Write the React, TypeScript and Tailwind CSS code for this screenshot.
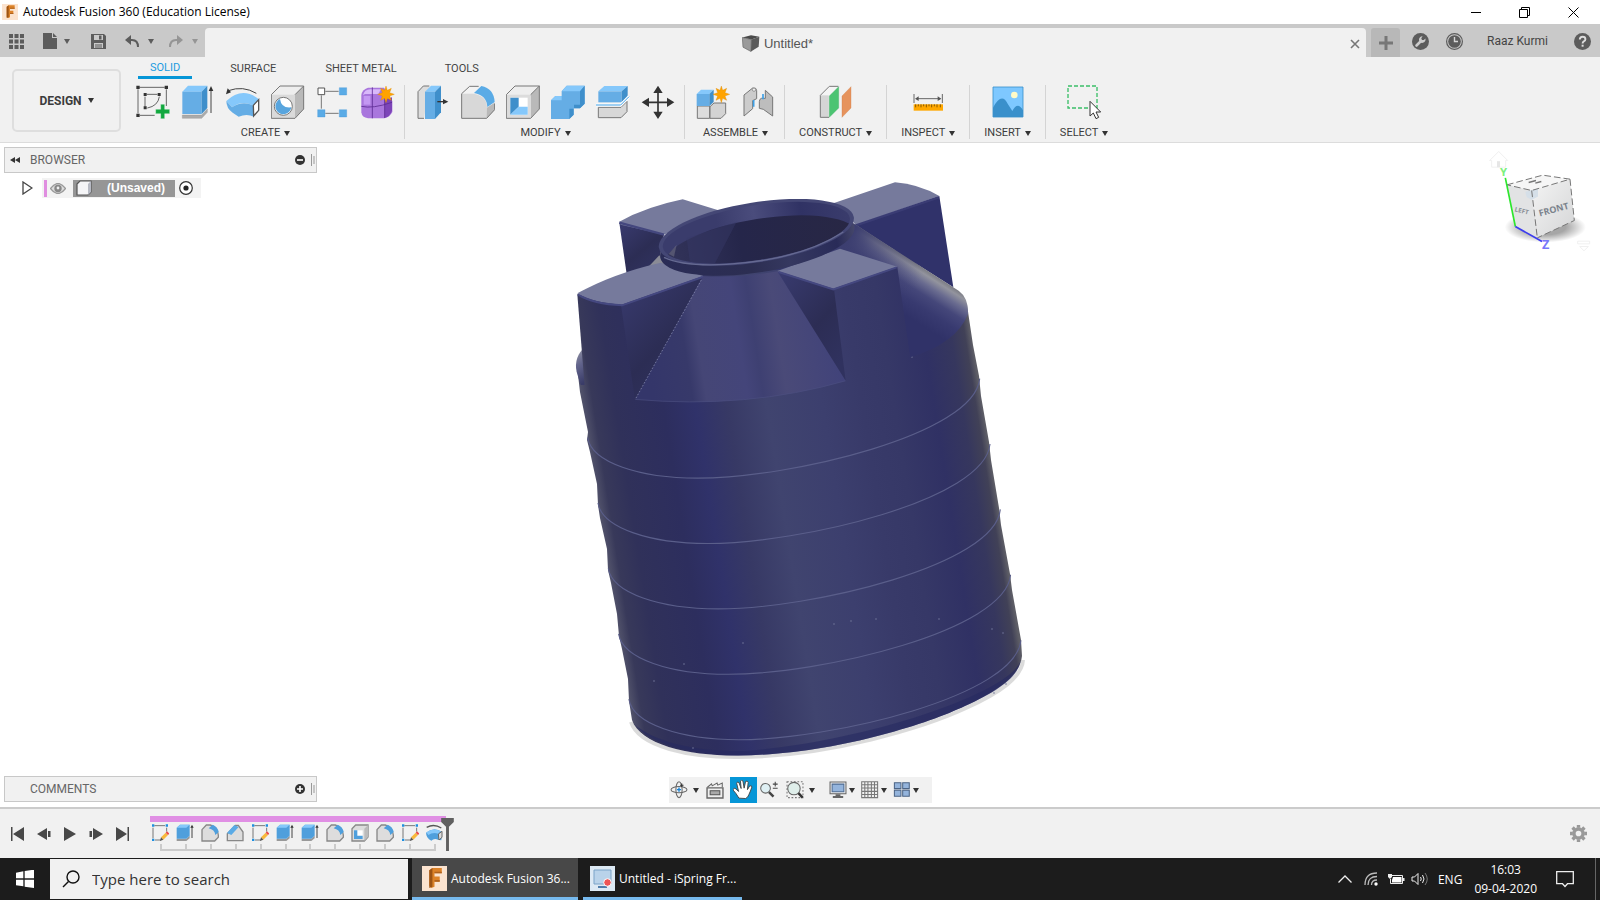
import type { ReactNode } from "react";

const UI = "font-[Roboto,'Liberation_Sans',sans-serif]";
const WIN = "font-['Open_Sans','Noto_Sans',sans-serif]";

function Svg({ box, className, children }: { box: string; className: string; children: ReactNode }) {
  return (
    <svg viewBox={box} className={"shrink-0 " + className} fill="none" aria-hidden="true">
      {children}
    </svg>
  );
}

function Caret({ className = "text-[#333]" }: { className?: string }) {
  return (
    <svg viewBox="0 0 6 5" className={"h-[5px] w-[6px] shrink-0 " + className} aria-hidden="true">
      <path d="M0 0h6L3 5z" fill="currentColor" />
    </svg>
  );
}

/* ---------- ribbon icons: 102 units = 34px ---------- */
function Big({ box, children }: { box: string; children: ReactNode }) {
  return <Svg box={box} className="h-[34px] w-[34px]">{children}</Svg>;
}

function Star({ x, y, s = 1 }: { x: number; y: number; s?: number }) {
  return (
    <path
      transform={`translate(${x} ${y}) scale(${s})`}
      d="M0-25L4-12 16-18 11-5 25 0 11 5 16 18 4 12 0 25-4 12-16 18-11 5-25 0-11-5-16-18-4-12z"
      fill="#ffa300"
      stroke="#d98600"
      strokeWidth="1"
    />
  );
}

const create: [string, ReactNode][] = [
  ["Create Sketch", (
    <Big box="408 255 102 102">
      <path d="M418 262h76M414 268v72M499 268v50M420 346h44M440 283h32M435 290v30M478 290q-4 28-36 34" stroke="#666" strokeWidth="3" />
      <path d="M409 257h10v10h-10zM494 257h10v10h-10zM409 341h10v10h-10zM431 279h9v9h-9zM473 279h9v9h-9zM431 319h9v9h-9z" fill="#333" />
      <path d="M482 313h12v15h15v13h-15v15h-12v-15h-15v-13h15z" fill="#12a83f" stroke="#fff" strokeWidth="1" />
    </Big>
  )],
  ["Extrude", (
    <Big box="543 255 102 102">
      <path d="M547 345h58l17-18v10l-17 18h-58z" fill="#ababab" stroke="#888" />
      <path d="M547 275l17-18h58l-17 18z" fill="#85c8fb" />
      <path d="M547 275h58v67h-58z" fill="#65ade5" />
      <path d="M605 275l17-18v67l-17 18z" fill="#3f8fcb" />
      <path d="M633 339v-70" stroke="#444" strokeWidth="3" />
      <path d="M626 273l7-15 7 15z" fill="#333" />
    </Big>
  )],
  ["Revolve", (
    <Big box="678 255 102 102">
      <path d="M685 272q44-16 84 8" stroke="#444" strokeWidth="3" />
      <path d="M678 283l5-18 10 12z" fill="#333" />
      <path d="M679 303q48-45 98-5l-17 19q-32-18-64 5z" fill="#85c8fb" />
      <path d="M679 303l17 19q32-22 64-5l2 33q-22-10-46 0l-18-12q-19-13-19-35z" fill="#65ade5" />
      <path d="M760 316l16-17v32l-15 17z" fill="#fff" stroke="#555" strokeWidth="4" />
    </Big>
  )],
  ["Hole", (
    <Big box="813 255 102 102">
      <path d="M814 284l26-26h71l-26 26z" fill="#eee" />
      <path d="M885 284l26-26v69l-26 28z" fill="#b9b9b9" />
      <path d="M814 284h71v71h-71z" fill="#dadada" />
      <path d="M814 284l26-26h71v69l-26 28h-71zM911 258l-26 26" stroke="#777" strokeWidth="3" />
      <circle cx="850" cy="319" r="27" fill="#fff" stroke="#777" strokeWidth="3" />
      <path d="M840 297a24 24 0 1 0 34 25q-30 4-34-25z" fill="#58a5de" />
    </Big>
  )],
  ["Pattern", (
    <Big box="942 255 102 102">
      <path d="M970 274h40M958 286v40M970 340h40" stroke="#777" strokeWidth="3" />
      <path d="M948 264h20v20h-20z" fill="#fff" stroke="#555" strokeWidth="3" />
      <path d="M1012 263h22v22h-22zM947 329h22v22h-22zM1012 329h22v22h-22z" fill="#5aabe6" stroke="#3d93d3" />
    </Big>
  )],
  ["Create Form", (
    <Big box="1080 255 102 102">
      <path d="M1081 285q2-16 20-22h48l25 40v33q-8 16-24 19h-49q-18-2-20-18z" fill="#a976dd" />
      <path d="M1086 286q4-18 22-18h32l-8 14h-40z" fill="#d9b9fa" />
      <path d="M1151 300l22-8v40q-6 18-22 21z" fill="#7d45b8" />
      <path d="M1081 319q34 8 92-12M1114 262v93M1151 280v74" stroke="#5e2d94" strokeWidth="2.500" />
      <path d="M1088 288h20v26h-20z" fill="#c498f2" />
      <Star x={1155} y={283} />
    </Big>
  )],
];

const modify: [string, ReactNode][] = [
  ["Press Pull", (
    <Big box="48 255 102 102">
      <path d="M72 355H54v-80l16-17h18" fill="#ddd" stroke="#777" strokeWidth="3" />
      <path d="M75 275l18-18h30l-18 18z" fill="#85c8fb" />
      <path d="M75 275h30v82H75z" fill="#65ade5" />
      <path d="M105 275l18-18v80l-18 20z" fill="#3f8fcb" />
      <path d="M112 305h20" stroke="#333" strokeWidth="4" />
      <path d="M129 297l16 8-16 8z" fill="#333" />
    </Big>
  )],
  ["Fillet", (
    <Big box="183 255 102 102">
      <path d="M185 281l24-22h27l-14 20z" fill="#f3f3f3" />
      <path d="M185 281h36q40 6 40 42l23-15v21l-24 26h-75z" fill="#d8d8d8" />
      <path d="M261 323l23-15v21l-24 26z" fill="#b9b9b9" />
      <path d="M236 259l-27 0-24 22v74h75l24-26v-18" stroke="#777" strokeWidth="3" />
      <path d="M222 279l22-21q38 8 40 48l-22 15q-2-36-40-42z" fill="#5aabe6" />
    </Big>
  )],
  ["Shell", (
    <Big box="318 255 102 102">
      <path d="M319 284l26-26h73l-26 26z" fill="#eee" />
      <path d="M392 284l26-26v69l-26 28z" fill="#b9b9b9" />
      <path d="M319 284h73v71h-73z" fill="#dcdcdc" />
      <path d="M319 284l26-26h73v69l-26 28h-73zM418 258l-26 26" stroke="#777" strokeWidth="3" />
      <path d="M331 293h52v51h-52z" fill="#fff" />
      <path d="M331 293l25 0v27l-25 24z" fill="#3f8fcb" />
      <path d="M331 344l25-24h27v24z" fill="#85c8fb" />
    </Big>
  )],
  ["Combine", (
    <Big box="453 255 102 102">
      <path d="M453 301l13-13h19v-14l15-17h54v54l-14 14h-19v19l-13 13h-55z" fill="#65ade5" />
      <path d="M485 274l15-17h54l-14 17zM453 301l13-13h19v13z" fill="#85c8fb" />
      <path d="M540 274l14-17v54l-14 14h-19v19l-13 13v-31h14v-12h18z" fill="#3f8fcb" />
    </Big>
  )],
  ["Split Body", (
    <Big box="588 255 102 102">
      <path d="M595 274l18-16h70l-18 16z" fill="#85c8fb" />
      <path d="M595 274h70v33h-70z" fill="#65ade5" />
      <path d="M665 274l18-16v32l-18 17z" fill="#3f8fcb" />
      <path d="M595 322h68l18-18v31l-18 18h-68z" fill="#d8d8d8" stroke="#777" strokeWidth="3" />
      <path d="M588 315h74l25-25" stroke="#fff" strokeWidth="9" />
      <path d="M588 315h74l25-25" stroke="#3ea0e6" strokeWidth="3" />
    </Big>
  )],
  ["Move", (
    <Big box="721 255 102 102">
      <path d="M772 272v70M738 307h70" stroke="#333" strokeWidth="5" />
      <path d="M772 257l14 22h-28zM772 357l14-22h-28zM723 307l22-14v28zM821 307l-22-14v28z" fill="#333" />
    </Big>
  )],
];

const assemble: [string, ReactNode][] = [
  ["New Component", (
    <Big box="888 255 102 102">
      <path d="M892 318h37v37h-37z" fill="#ddd" stroke="#777" strokeWidth="3" />
      <path d="M930 320l12-11h35v32l-14 14h-33z" fill="#d3d3d3" stroke="#777" strokeWidth="3" />
      <path d="M890 282l13-13h38l-13 13z" fill="#85c8fb" />
      <path d="M890 282h38v36h-38z" fill="#65ade5" />
      <path d="M928 282l13-13v37l-13 12z" fill="#3f8fcb" />
      <Star x={964} y={283} />
    </Big>
  )],
  ["Joint", (
    <Big box="1023 255 102 102">
      <path d="M1032 285l26-21q12-2 12 8v24l-12 6v24l-26 22z" fill="#ccc" stroke="#777" strokeWidth="3" />
      <path d="M1118 291l-22-20v24h-12q-6 2-6 10v20l12 3 28 20z" fill="#bdbdbd" stroke="#777" strokeWidth="3" />
      <path d="M1061 300v20M1089 282v16" stroke="#3ea0e6" strokeWidth="5" />
      <circle cx="1062" cy="269" r="5" fill="#eee" stroke="#777" strokeWidth="2" />
    </Big>
  )],
];

const construct: [string, ReactNode][] = [
  ["Offset Plane", (
    <Big box="123 255 102 102">
      <path d="M127 286l27-27h27v13l-28 28v52h-26z" fill="#f4f4f4" />
      <path d="M128 286h24v65h-24z" fill="#d5d5d5" />
      <path d="M153 352h-26v-66l27-27h27" stroke="#777" strokeWidth="3" />
      <path d="M154 288l28-28v64l-28 28z" fill="#4cc472" stroke="#38a65c" />
      <path d="M192 288l27-28v64l-27 28z" fill="#e6935d" stroke="#cf7c45" />
    </Big>
  )],
];

const inspect: [string, ReactNode][] = [
  ["Measure", (
    <Big box="399 255 102 102">
      <path d="M408 282v27M493 282v27M415 296h72" stroke="#666" strokeWidth="3" />
      <path d="M411 296l11-7v14zM490 296l-11-7v14z" fill="#555" />
      <path d="M407 313h88v19h-88z" fill="#ffa800" />
      <path d="M413 313v9M421 313v6M429 313v9M437 313v6M445 313v9M453 313v6M461 313v9M469 313v6M477 313v9M487 313v9" stroke="#8a5a00" strokeWidth="3" />
    </Big>
  )],
];

const insert: [string, ReactNode][] = [
  ["Insert Image", (
    <Big box="630 255 102 102">
      <path d="M636 261h90v90h-90z" fill="#7ec8ff" />
      <circle cx="700" cy="285" r="10" fill="#fffbc8" />
      <path d="M636 323q26-48 44-12l14 22q16-30 32-2v20h-90z" fill="#3a90cb" />
      <path d="M636 261h90v90h-90z" stroke="#3a90cb" strokeWidth="2.500" />
    </Big>
  )],
];

const select: [string, ReactNode][] = [
  ["Select", (
    <Big box="854 255 102 102">
      <path d="M857 258h87v66h-87z" stroke="#3bbf68" strokeWidth="4" strokeDasharray="12 6" />
      <path d="M923 304v44l10-9 8 17 8-4-8-16h14z" fill="#fff" stroke="#333" strokeWidth="3" />
    </Big>
  )],
];

function Group({ label, tools, last, wide }: { label: string; tools: [string, ReactNode][]; last?: boolean; wide?: boolean }) {
  return (
    <section
      aria-label={label}
      className={"flex h-[54px] flex-col items-center justify-between " + (wide ? "pl-[11px] pr-[9px] " : "px-[14px] ") + (last ? "" : "border-r border-[#d4d4d4]")}
    >
      <div className="flex gap-[11px]">
        {tools.map(([name, icon]) => (
          <button key={name} type="button" aria-label={name} className="block">{icon}</button>
        ))}
      </div>
      <button type="button" className="flex items-center gap-1 text-[11px] leading-[12px] text-[#3c3c3c]">
        {label}
        <Caret />
      </button>
    </section>
  );
}

function FusionLogo({ className }: { className: string }) {
  return (
    <Svg box="0 0 24 24" className={className}>
      <path d="M0 0h24v24H0z" fill="#fbe3cf" />
      <path d="M7 4l3-2h9v5h-7v3h5v5h-5v5l-3 1-2-2z" fill="#dc8228" />
      <path d="M7 4l3-2v18l-3 1z" fill="#9c5314" />
      <path d="M12 7h7V5.500h-7zM12 15h5v-1.500h-5z" fill="#b0621d" />
    </Svg>
  );
}

/* ---------- timeline icons: 54 units = 18px ---------- */
function SketchMini() {
  return (
    <Svg box="454 192 54 54" className="h-[18px] w-[18px]">
      <path d="M464 197h32M460 203v32M501 203v12M466 240h18" stroke="#777" strokeWidth="3" />
      <path d="M457 193h7v7h-7zM498 193h7v7h-7zM457 236h7v7h-7z" fill="#1f8fe0" />
      <path d="M484 232l14-14 7 7-14 14z" fill="#f8b93c" />
      <path d="M498 218l4-4 7 7-4 4z" fill="#ea4b4b" />
      <path d="M484 232l7 7-10 4z" fill="#555" />
    </Svg>
  );
}
function ExtrudeMini() {
  return (
    <Svg box="529 192 54 54" className="h-[18px] w-[18px]">
      <path d="M531 236h29l10-9v8l-10 8h-29z" fill="#999" />
      <path d="M531 203l10-9h29v33l-10 9h-29z" fill="#4f9fdc" />
      <path d="M531 203l10-9h29l-10 9z" fill="#85c8fb" />
      <path d="M577 234v-33" stroke="#444" strokeWidth="3" />
      <path d="M572 203l5-9 5 9z" fill="#333" />
    </Svg>
  );
}
function FilletMini() {
  return (
    <Svg box="604 192 54 54" className="h-[18px] w-[18px]">
      <path d="M607 209l13-14h12q22 8 24 30v7l-11 11h-38z" fill="#ddd" stroke="#888" strokeWidth="4" />
      <path d="M627 205l12-11q15 6 18 22l-10 9q-2-16-20-20z" fill="#4f9fdc" />
    </Svg>
  );
}
function ChamferMini() {
  return (
    <Svg box="679 192 54 54" className="h-[18px] w-[18px]">
      <path d="M683 221l24-25h9l14 20v26h-47z" fill="#ddd" stroke="#888" strokeWidth="4" />
      <path d="M682 219l22-24 13 6-22 24z" fill="#5aabe6" />
    </Svg>
  );
}
function ShellMini() {
  return (
    <Svg box="1054 192 54 54" className="h-[18px] w-[18px]">
      <path d="M1057 206l11-11h37v36l-11 12h-37z" fill="#ddd" stroke="#888" strokeWidth="4" />
      <path d="M1094 206l11-11v36l-11 12z" fill="#bbb" />
      <path d="M1063 211h26v26h-26z" fill="#fff" />
      <path d="M1063 211h10v16h16v10h-26z" fill="#4f9fdc" />
    </Svg>
  );
}
function RevolveMini() {
  return (
    <Svg box="1282 192 54 54" className="h-[18px] w-[18px]">
      <path d="M1284 202q22-12 44 2" stroke="#555" strokeWidth="4" />
      <path d="M1282 218q24-20 48-2l-2 25-10-2q-12-5-20 3-16-6-16-26z" fill="#4f9fdc" />
      <path d="M1283 217q22-16 44-3l-8 7q-16-6-30 4z" fill="#85c8fb" />
      <path d="M1319 222l11-8v18l-9 8z" fill="#ddd" stroke="#666" strokeWidth="3" />
    </Svg>
  );
}

const features: [string, () => ReactNode][] = [
  ["Sketch1", SketchMini], ["Extrude1", ExtrudeMini], ["Fillet1", FilletMini], ["Chamfer1", ChamferMini],
  ["Sketch2", SketchMini], ["Extrude2", ExtrudeMini], ["Extrude3", ExtrudeMini], ["Fillet2", FilletMini],
  ["Shell1", ShellMini], ["Fillet3", FilletMini], ["Sketch3", SketchMini], ["Revolve1", RevolveMini],
];

const ribs = [-1, 0, 1, 2, 3];
const specks: [number, number][] = [[834, 624], [851, 621], [876, 619], [939, 619], [992, 629], [1003, 633], [743, 643], [684, 664], [654, 681], [912, 357], [693, 748], [994, 693], [1006, 684]];

function Tank() {
  return (
    <svg viewBox="570 143 460 664" className="h-[664px] w-[460px]" role="img" aria-label="Water tank model">
      <defs>
        <linearGradient id="body" gradientUnits="userSpaceOnUse" x1="603" y1="530" x2="992" y2="468.600">
          <stop offset="0" stopColor="#50516a" />
          <stop offset="0.025" stopColor="#38395a" />
          <stop offset="0.08" stopColor="#30315a" />
          <stop offset="0.2" stopColor="#2d2e5e" />
          <stop offset="0.28" stopColor="#30326a" />
          <stop offset="0.36" stopColor="#373965" />
          <stop offset="0.46" stopColor="#40446f" />
          <stop offset="0.6" stopColor="#3c3f6e" />
          <stop offset="0.7" stopColor="#383a69" />
          <stop offset="0.78" stopColor="#363867" />
          <stop offset="0.88" stopColor="#303164" />
          <stop offset="0.95" stopColor="#36375e" />
          <stop offset="0.985" stopColor="#414157" />
          <stop offset="1" stopColor="#5d5d66" />
        </linearGradient>
        <linearGradient id="cone" gradientUnits="userSpaceOnUse" x1="260" y1="560" x2="840" y2="470">
          <stop offset="0" stopColor="#34366a" />
          <stop offset="0.2" stopColor="#37396a" />
          <stop offset="0.27" stopColor="#454676" />
          <stop offset="0.48" stopColor="#44457a" />
          <stop offset="0.56" stopColor="#3e4072" />
          <stop offset="0.68" stopColor="#4a4a78" />
          <stop offset="1" stopColor="#40427a" />
        </linearGradient>
        <linearGradient id="shoulder" gradientUnits="userSpaceOnUse" x1="1042" y1="262" x2="962" y2="388">
          <stop offset="0" stopColor="#77787f" />
          <stop offset="0.1" stopColor="#93949e" />
          <stop offset="0.26" stopColor="#6a6c90" />
          <stop offset="0.46" stopColor="#45477a" />
          <stop offset="0.7" stopColor="#383a70" />
          <stop offset="1" stopColor="#303268" />
        </linearGradient>
        <linearGradient id="necktone" gradientUnits="userSpaceOnUse" x1="870" y1="200" x2="1080" y2="330">
          <stop offset="0" stopColor="#3c3e70" />
          <stop offset="0.3" stopColor="#3c3e70" stopOpacity=".6" />
          <stop offset="1" stopColor="#3c3e70" stopOpacity="0" />
        </linearGradient>
        <linearGradient id="rim" x1="0" x2="1">
          <stop offset="0" stopColor="#3a3c6c" />
          <stop offset="0.3" stopColor="#3a3c6c" />
          <stop offset="0.5" stopColor="#4a4c7c" />
          <stop offset="0.75" stopColor="#303264" />
          <stop offset="1" stopColor="#3a3c6c" />
        </linearGradient>
        <linearGradient id="rimside" x1="0" x2="1">
          <stop offset="0" stopColor="#2a2c56" />
          <stop offset="0.45" stopColor="#2c2e52" />
          <stop offset="0.65" stopColor="#353860" />
          <stop offset="0.9" stopColor="#292b58" />
          <stop offset="1" stopColor="#45476a" />
        </linearGradient>
        <linearGradient id="well" x1="0" x2="1">
          <stop offset="0" stopColor="#33345a" />
          <stop offset="0.25" stopColor="#2b2c52" />
          <stop offset="0.4" stopColor="#25264a" />
          <stop offset="1" stopColor="#282744" />
        </linearGradient>
        <linearGradient id="sideL" x1="0" y1="0" x2="0.7" y2="1">
          <stop offset="0" stopColor="#393b70" />
          <stop offset="0.6" stopColor="#2c2d54" />
          <stop offset="1" stopColor="#30325f" />
        </linearGradient>
        <linearGradient id="bulge" x1="0" y1="0" x2="0.3" y2="1">
          <stop offset="0" stopColor="#9a9ba6" />
          <stop offset="0.5" stopColor="#62648c" />
          <stop offset="1" stopColor="#3a3c68" />
        </linearGradient>
        <clipPath id="opening">
          <ellipse cx="589" cy="188" rx="284" ry="82" transform="rotate(-9 589 188)" />
        </clipPath>
      </defs>

      <path d="M631 722C639 747 690 757.500 738 757C830 756.500 925 727 966 708C1001 692 1022 677 1023 660" fill="none" stroke="#000" strokeOpacity=".14" strokeWidth="4" />
      <path
        d="M577 366L580 392 588 432 587 440 590 452 597 484 598 505 600 518 607 549 608 570 611 583 617 614 619 636 622 649 628 679 629 701 632 720C640 745 690 756 738 755.500C830 755 925 725 965 706C1000 690 1020 675 1022 656L1021 640 1012 590 1010 574 1001 525 999 508 991 460 989 442 981 396 979 376 973 345 967 305 900 250 700 250 600 300Z"
        fill="url(#body)"
      />
      <path d="M634 724C650 745 695 755 738 755.500C830 755 925 725 965 706C1000 690 1018 677 1021 660C1010 694 862 742 745 751C695 752 655 742 634 724Z" fill="#272960" opacity=".6" />
      {ribs.map((n) => (
        <g key={n} transform={`translate(${n * 10.3} ${n * 65.4})`}>
          <path d="M598 503C602 528 650 543.500 708 543.500C800 543.500 985 500 990 444" fill="none" stroke="#5a5e8a" strokeWidth="1.100" />
        </g>
      ))}
      {specks.map(([x, y]) => (
        <circle key={x} cx={x} cy={y} r=".8" fill="#70749a" />
      ))}

      <g transform="translate(560 170) scale(.33333)">
        {/* rear left lug */}
        <path d="M178 158L312 192 300 262 262 296 200 312Z" fill="url(#sideL)" />
        <path d="M178 155Q260 110 368 88L480 122 312 194 182 164Z" fill="#767a9c" />
        <path d="M178 158L312 194" stroke="#44477e" strokeWidth="7" />
        <path d="M262 294L298 256 320 286Z" fill="#8a8b96" />
        {/* rear right lug */}
        <path d="M1138 78L1180 352 885 165Z" fill="#30326a" />
        <path d="M820 100L1005 37Q1075 42 1138 78L888 165Z" fill="#767a9c" />
        <path d="M1136 82L888 166" stroke="#3a3c74" strokeWidth="7" />
        {/* right shoulder */}
        <path d="M640 300L860 150 900 170 1012 296Z" fill="#35376a" />
        <path d="M780 262L885 163 1196 362Q1226 384 1224 432Q1190 520 1050 562L1010 292Z" fill="url(#shoulder)" />
        <path d="M780 262L885 163 1196 362Q1226 384 1224 432Q1190 520 1050 562L1010 292Z" fill="url(#necktone)" />
        {/* left shoulder */}
        <path d="M78 528Q40 560 50 606L62 645 95 645Z" fill="url(#bulge)" />
        {/* cone */}
        <path d="M425 318Q540 325 655 303L858 632Q560 718 223 688Z" fill="url(#cone)" />
        <path d="M858 632Q560 718 223 688" fill="none" stroke="#4b4e80" strokeWidth="2" />
      </g>

      {/* outer faces of the front lugs continue the wall shading */}
      <path d="M577.300 294L621 305 635 400 637 425 588 425 584 378Z" fill="url(#body)" />
      <path d="M833 289L897.300 266.700 910 357.300 912 370 846 384Z" fill="url(#body)" />

      <g transform="translate(560 170) scale(.33333)">
        {/* front left lug */}
        <path d="M183 405L428 320 225 690Z" fill="url(#sideL)" />
        <path d="M52 370Q160 310 302 278L430 318 185 404Q100 400 52 370Z" fill="#767a9c" />
        <path d="M428 321L186 406Q100 402 54 374" fill="none" stroke="#454880" strokeWidth="6" />
        <path d="M424 330L227 686" stroke="#8083aa" strokeWidth="2.500" strokeDasharray="5 5" />
        {/* front right lug */}
        <path d="M652 304L822 358 857 632Z" fill="url(#sideL)" />
        <path d="M652 303L840 236 1012 290 820 356Z" fill="#767a9c" />
        <path d="M656 306L820 358 1010 292" fill="none" stroke="#454880" strokeWidth="6" />
        {/* neck */}
        <ellipse cx="592" cy="216" rx="295" ry="91" transform="rotate(-9 592 216)" fill="url(#rimside)" />
        <ellipse cx="589" cy="187" rx="296" ry="90" transform="rotate(-9 589 187)" fill="#444775" />
        <ellipse cx="589" cy="188" rx="284" ry="82" transform="rotate(-9 589 188)" fill="url(#rim)" />
        <g clipPath="url(#opening)">
          <ellipse cx="604" cy="236" rx="292" ry="90" transform="rotate(-9 604 236)" fill="url(#well)" />
          <path d="M530 155L465 280 390 280 380 205Z" fill="#383a68" opacity=".45" />
          <path d="M326 252l24-28-8 36z" fill="#77788a" opacity=".5" />
        </g>
        <path d="M312 262Q370 290 500 283Q720 270 850 186" fill="none" stroke="#666a92" strokeWidth="4" />
      </g>
    </svg>
  );
}

function ViewCube() {
  return (
    <svg viewBox="860 440 330 320" className="absolute right-[3px] top-[4px] h-[107px] w-[110px]" role="img" aria-label="View cube">
      <defs>
        <radialGradient id="cubeshadow">
          <stop offset=".5" stopColor="#000" stopOpacity=".35" />
          <stop offset="1" stopColor="#000" stopOpacity="0" />
        </radialGradient>
        <linearGradient id="face" x1="0" y1="0" x2="1" y2="1">
          <stop offset="0" stopColor="#f4f4f4" />
          <stop offset="1" stopColor="#d4d5d6" />
        </linearGradient>
      </defs>
      <path d="M868 480l27-27 27 27h-6v20h-42v-20z" fill="#fff" stroke="#f0f0f0" strokeWidth="3" />
      <path d="M890 482h9v18h-9z" fill="#e6e6e6" />
      <ellipse cx="1035" cy="680" rx="122" ry="46" fill="url(#cubeshadow)" />
      <path d="M920 553l107-29 82 12-115 34z" fill="#f6f6f6" />
      <path d="M920 553l74 17 17 142-66-34z" fill="#e2e3e4" />
      <path d="M994 570l115-34 13 124-111 52z" fill="url(#face)" />
      <path d="M975 574l38-10v24l-18 10-16-8z" fill="#d5dfe8" />
      <path d="M920 553l107-29 82 12-115 34zM994 570l17 142M1109 536l13 124-111 52" fill="none" stroke="#777" strokeWidth="3" strokeDasharray="20 9" />
      <path d="M985 546l22-6M1005 548l18-5" stroke="#777" strokeWidth="4" />
      <text x="1018" y="648" transform="rotate(-15 1018 648)" className="font-['Open_Sans',sans-serif] text-[27px] font-bold" fill="#7b838c">FRONT</text>
      <text x="942" y="632" transform="rotate(14 942 632)" className="font-['Open_Sans',sans-serif] text-[19px] font-bold" fill="#8a9096">LEFT</text>
      <path d="M915 532l30 146" stroke="#2de62d" strokeWidth="5" />
      <path d="M945 678l80 45" stroke="#3c3cf0" strokeWidth="5" />
      <text x="899" y="525" className="font-['Open_Sans',sans-serif] text-[34px] font-bold" fill="#7cf07c">Y</text>
      <text x="1025" y="744" className="font-['Open_Sans',sans-serif] text-[38px] font-bold" fill="#7878fa">Z</text>
      <path d="M1132 722h36v8h-36zM1138 738h26l-13 13z" fill="#fff" stroke="#f0f0f0" strokeWidth="3" />
    </svg>
  );
}

function PanelBar({ title, open }: { title: string; open: boolean }) {
  return (
    <div className="flex h-[26px] items-center border border-[#c8c8c8] bg-[#f1f1f1] pl-[5px] pr-px">
      <div className="w-5">
        {open && (
          <button type="button" aria-label="Collapse browser" className="block">
            <Svg box="0 0 10 6" className="h-[6px] w-[10px]">
              <path d="M5 0v6L0 3zM10 0v6L5 3z" fill="#333" />
            </Svg>
          </button>
        )}
      </div>
      <h2 className="flex-1 text-[12px] leading-4 text-[#666]">{title}</h2>
      <button type="button" aria-label={open ? "Hide" : "Show"} className="mr-[6px] block">
        <Svg box="0 0 10 10" className="h-[10px] w-[10px]">
          <circle cx="5" cy="5" r="5" fill="#333" />
          <path d={open ? "M2 5h6" : "M2 5h6M5 2v6"} stroke="#fff" strokeWidth="1.600" />
        </Svg>
      </button>
      <Svg box="0 0 4 12" className="h-3 w-1">
        <path d="M.5 0v12M3 2v8" stroke="#999" strokeWidth="1" />
      </Svg>
    </div>
  );
}

/* ---------- view toolbar ---------- */
function NavIcon({ box, children }: { box: string; children: ReactNode }) {
  return <Svg box={box} className="h-[18px] w-[18px]">{children}</Svg>;
}

function NavButton({ name, menu, active, className, children }: { name: string; menu?: boolean; active?: boolean; className: string; children: ReactNode }) {
  return (
    <button
      type="button"
      aria-label={name}
      aria-pressed={active}
      className={"flex h-full items-center justify-center " + className + (active ? " bg-[#0696d7]" : "")}
    >
      {children}
      {menu && <Caret />}
    </button>
  );
}

function ViewBar() {
  return (
    <div className="absolute inset-x-0 bottom-1 flex justify-center">
      <div role="toolbar" aria-label="View" className="flex h-[26px] items-center bg-[#f1f1f1] pr-[10px]">
        <NavButton name="Orbit" menu className="w-[32px] gap-[5px]">
          <NavIcon box="783 64 52 52">
            <ellipse cx="809" cy="89" rx="23" ry="9" stroke="#666" strokeWidth="3" />
            <ellipse cx="809" cy="89" rx="9" ry="23" stroke="#666" strokeWidth="3" />
            <path d="M812 76h10M817 71v10" stroke="#333" strokeWidth="3" />
            <path d="M803 89h12M809 83v12" stroke="#1c84d6" strokeWidth="4" />
          </NavIcon>
        </NavButton>
        <NavButton name="Look At" className="w-[29px]">
          <NavIcon box="884 64 52 52">
            <path d="M887 84h46v29h-46z" fill="#eee" stroke="#666" strokeWidth="4" />
            <path d="M896 92h28v12h-28z" fill="#aaa" stroke="#555" strokeWidth="3" />
            <path d="M888 82l12-10 2 6 14-8 2 6 13-6v12" stroke="#666" strokeWidth="3" />
          </NavIcon>
        </NavButton>
        <NavButton name="Pan" active className="w-[27px]">
          <Svg box="964 64 54 54" className="h-[20px] w-[20px]">
            <path d="M980 113q-8-14-16-22 1-7 8-3l7 7-5-22q1-6 6-2l6 16-2-20q3-5 7 0l3 19 4-18q5-3 7 2l-2 20 6-10q6-2 6 3-4 12-8 20-2 8-9 11z" fill="#fff" stroke="#444" strokeWidth="2.500" />
          </Svg>
        </NavButton>
        <NavButton name="Zoom" className="w-[24px]">
          <NavIcon box="1041 64 52 52">
            <circle cx="1057" cy="85" r="14" fill="#dff0f4" stroke="#666" strokeWidth="3" />
            <path d="M1067 96l13 13" stroke="#444" strokeWidth="7" />
            <path d="M1078 73h14M1085 66v14M1078 85h14" stroke="#444" strokeWidth="3" />
          </NavIcon>
        </NavButton>
        <NavButton name="Fit" menu className="w-[40px] gap-[5px]">
          <NavIcon box="1119 64 52 52">
            <path d="M1122 66h46v46h-46z" stroke="#777" strokeWidth="3" strokeDasharray="5 5" />
            <circle cx="1142" cy="86" r="18" fill="#dfeeea" stroke="#666" strokeWidth="3" />
            <path d="M1155 99l12 13" stroke="#333" strokeWidth="7" />
          </NavIcon>
        </NavButton>
        <NavButton name="Display Settings" menu className="ml-[5px] w-[32px] gap-[2px]">
          <NavIcon box="1243 64 52 52">
            <path d="M1246 67h46v34h-46z" fill="#eee" stroke="#666" strokeWidth="3" />
            <path d="M1252 73h34v22h-34z" fill="#94b4dc" stroke="#4c6b94" strokeWidth="3" />
            <path d="M1262 102h14v5h8v6h-30v-6h8z" fill="#666" />
          </NavIcon>
        </NavButton>
        <NavButton name="Grid and Snaps" menu className="w-[32px] gap-[2px]">
          <NavIcon box="1338 64 52 52">
            <path d="M1340 66h46v46h-46zM1349 66v46M1358 66v46M1368 66v46M1377 66v46M1340 75h46M1340 84h46M1340 94h46M1340 103h46" stroke="#777" strokeWidth="3" />
          </NavIcon>
        </NavButton>
        <NavButton name="Viewports" menu className="w-[32px] gap-[2px]">
          <NavIcon box="1430 64 52 52">
            <path d="M1434 69h19v17h-19zM1458 69h19v17h-19zM1434 91h19v17h-19zM1458 91h19v17h-19z" fill="#94b4dc" stroke="#4c6485" strokeWidth="3" />
          </NavIcon>
        </NavButton>
      </div>
    </div>
  );
}

const transport: [string, string][] = [
  ["Go to start", "M1 1h1.500v14H1zM14 1v14L3 8z"],
  ["Step back", "M11 2v12L1 8zM12 5h2.500v6H12z"],
  ["Play", "M2 1v14l12-7z"],
  ["Step forward", "M1.500 5H4v6H1.500zM5 2v12l10-6z"],
  ["Go to end", "M2 1v14l11-7zM13.500 1H15v14h-1.500z"],
];

export default function App() {
  return (
    <div className={"flex h-screen min-h-[600px] flex-col overflow-hidden bg-white " + UI}>
      <header className={"flex h-6 shrink-0 items-center bg-white pl-[2px] pr-[2px] " + WIN}>
        <FusionLogo className="h-4 w-4" />
        <h1 className="ml-[5px] flex-1 text-[12px] leading-6 text-black">Autodesk Fusion 360 (Education License)</h1>
        <button type="button" aria-label="Minimize" className="flex w-[49px] justify-center">
          <Svg box="0 0 10 10" className="h-[10px] w-[10px]"><path d="M0 5.500h10" stroke="#000" /></Svg>
        </button>
        <button type="button" aria-label="Restore" className="flex w-[49px] justify-center">
          <Svg box="0 0 11 11" className="h-[11px] w-[11px]"><path d="M.5 2.500h8v8h-8zM2.500 2V.5h8v8H9" stroke="#000" /></Svg>
        </button>
        <button type="button" aria-label="Close" className="flex w-[49px] justify-center">
          <Svg box="0 0 11 11" className="h-[11px] w-[11px]"><path d="M.5.5l10 10M10.500.5l-10 10" stroke="#000" /></Svg>
        </button>
      </header>

      <div className="flex h-[33px] shrink-0 items-stretch bg-[#c9c9c9] pt-1">
        <nav aria-label="Quick access" className="flex w-[205px] shrink-0 items-center pb-[3px] pl-[9px] text-[#5c5c5c]">
          <button type="button" aria-label="Data panel">
            <Svg box="0 0 15 15" className="h-[15px] w-[15px]">
              <path d="M0 0h4v4H0zM5.500 0h4v4h-4zM11 0h4v4h-4zM0 5.500h4v4H0zM5.500 5.500h4v4h-4zM11 5.500h4v4h-4zM0 11h4v4H0zM5.500 11h4v4h-4zM11 11h4v4h-4z" fill="currentColor" />
            </Svg>
          </button>
          <button type="button" aria-label="File" className="ml-[19px] flex items-center gap-[7px]">
            <Svg box="0 0 14 16" className="h-4 w-[14px]"><path d="M0 0h9v5h5v11H0zM10 0l4 4h-4z" fill="currentColor" /></Svg>
            <Caret className="text-[#5c5c5c]" />
          </button>
          <button type="button" aria-label="Save" className="ml-[21px]">
            <Svg box="0 0 15 15" className="h-[15px] w-[15px]">
              <path fillRule="evenodd" d="M0 0h13l2 2v13H0zM3 1v5h9V1zM3 9v5h9V9z" fill="currentColor" />
              <path d="M8 1.500h2.500v4H8zM4 10.500h7v1H4zM4 12.500h7v1H4z" fill="currentColor" />
            </Svg>
          </button>
          <button type="button" aria-label="Undo" className="ml-[19px] flex items-center gap-[9px]">
            <Svg box="0 0 14 13" className="h-[13px] w-[14px]">
              <path d="M6 0L0 5l6 5z" fill="currentColor" />
              <path d="M4 5h3q6 0 6 7" stroke="currentColor" strokeWidth="2" />
            </Svg>
            <Caret className="text-[#5c5c5c]" />
          </button>
          <button type="button" aria-label="Redo" className="ml-[15px] flex items-center gap-[9px] text-[#959595]">
            <Svg box="0 0 14 13" className="h-[13px] w-[14px]">
              <path d="M8 0l6 5-6 5z" fill="currentColor" />
              <path d="M10 5H7q-6 0-6 7" stroke="currentColor" strokeWidth="2" />
            </Svg>
            <Caret className="text-[#959595]" />
          </button>
        </nav>
        <div className="flex flex-1 items-center rounded-t-[4px] bg-[#f1f1f1] pr-[6px] pt-[2px] font-['Liberation_Sans',sans-serif] text-[13px] text-[#555]">
          <div className="flex flex-1 items-center justify-center gap-1">
            <Svg box="1030 103 54 50" className="h-[17px] w-[18px]">
              <path d="M1031 110l26-7 25 5-24 8z" fill="#4a4a4a" />
              <path d="M1031 110l27 6-1 36-24-13z" fill="#9a9a9a" stroke="#666" strokeWidth="2" />
              <path d="M1058 116l24-8-2 30-23 14z" fill="#5a5a5a" />
            </Svg>
            <span className="leading-4">Untitled*</span>
          </div>
          <button type="button" aria-label="Close tab">
            <Svg box="0 0 10 10" className="h-[10px] w-[10px]"><path d="M1 1l8 8M9 1L1 9" stroke="#777" strokeWidth="1.600" /></Svg>
          </button>
        </div>
        <button type="button" aria-label="New design" className="ml-[5px] flex w-[29px] items-center justify-center rounded-t-[3px] bg-[#b8b8b8]">
          <Svg box="0 0 14 14" className="h-[14px] w-[14px]"><path d="M7 0v14M0 7h14" stroke="#777" strokeWidth="3" /></Svg>
        </button>
        <div className="flex items-center pb-[3px] pr-[9px] text-[#5c5c5c]">
          <button type="button" aria-label="Extensions" className="ml-3">
            <Svg box="0 0 17 17" className="h-[17px] w-[17px]">
              <circle cx="8.500" cy="8.500" r="8.500" fill="currentColor" />
              <path d="M4.500 12.500l4.500-4.500" stroke="#ccc" strokeWidth="2.600" strokeLinecap="round" />
              <path d="M13.400 5.600a3.300 3.300 0 1 1-2.800-2.300L9.300 5.200l.6 1.700 1.900.2z" fill="#ccc" />
            </Svg>
          </button>
          <button type="button" aria-label="Job status" className="ml-[17px]">
            <Svg box="0 0 17 17" className="h-[17px] w-[17px]">
              <circle cx="8.500" cy="8.500" r="7.900" stroke="currentColor" strokeWidth="1.200" />
              <circle cx="8.500" cy="8.500" r="6.300" fill="currentColor" />
              <path d="M8.500 4v4.500H12" stroke="#d6d6d6" strokeWidth="1.400" />
            </Svg>
          </button>
          <button type="button" className="ml-6 text-[12px] leading-4 text-[#444]">Raaz Kurmi</button>
          <button type="button" aria-label="Help" className="ml-[26px]">
            <Svg box="0 0 17 17" className="h-[17px] w-[17px]">
              <circle cx="8.500" cy="8.500" r="8.500" fill="currentColor" />
              <path d="M5.800 6.600q0-2.800 2.800-2.800t2.800 2.400q0 1.400-1.600 2.200-1.200.6-1.200 2" stroke="#ddd" strokeWidth="1.900" />
              <path d="M7.600 11.700h2v2h-2z" fill="#ddd" />
            </Svg>
          </button>
        </div>
      </div>

      <div className="flex h-[86px] shrink-0 border-b border-[#dcdcdc] bg-[#f1f1f1] pl-3">
        <button type="button" className="mt-3 flex h-[63px] w-[109px] shrink-0 items-center justify-center gap-[6px] rounded-[5px] border-2 border-[#dedede] text-[12px] font-bold text-[#3c3c3c]">
          DESIGN
          <Caret />
        </button>
        <div className="flex flex-col">
          <nav aria-label="Workspace tabs" className="ml-[17px] flex h-[22px] gap-[26px] text-[11px] leading-[24px] text-[#444]">
            <button type="button" className="border-b-[3px] border-[#0696d7] px-3 leading-[22px] text-[#1b9be0]">SOLID</button>
            <button type="button" className="px-3">SURFACE</button>
            <button type="button" className="px-[11px]">SHEET METAL</button>
            <button type="button" className="px-[11px]">TOOLS</button>
          </nav>
          <div className="ml-1 mt-[6px] flex">
            <Group label="CREATE" tools={create} wide />
            <Group label="MODIFY" tools={modify} wide />
            <Group label="ASSEMBLE" tools={assemble} wide />
            <Group label="CONSTRUCT" tools={construct} />
            <Group label="INSPECT" tools={inspect} />
            <Group label="INSERT" tools={insert} />
            <Group label="SELECT" tools={select} last />
          </div>
        </div>
      </div>

      <main className="relative flex min-h-0 flex-1 bg-white">
        <div className="absolute inset-0 flex justify-center overflow-hidden">
          <Tank />
        </div>
        <ViewCube />
        <aside className="relative ml-1 flex w-[313px] flex-col pb-[5px] pt-1">
          <PanelBar title="BROWSER" open />
          <div className="mt-[5px] flex h-5 items-center">
            <button type="button" aria-label="Expand" className="ml-[18px]">
              <Svg box="0 0 11 14" className="h-[14px] w-[11px]"><path d="M1 1l9 6-9 6z" fill="#fff" stroke="#444" strokeWidth="1.300" /></Svg>
            </button>
            <div className="ml-[9px] flex h-5 items-center bg-[#f3f3f3] pl-[2px] pr-2">
              <span className="h-[17px] w-[3px] bg-[#e08ee0]" />
              <button type="button" aria-label="Toggle visibility" className="ml-[3px]">
                <Svg box="0 0 16 11" className="h-[11px] w-4">
                  <path d="M.5 5.500Q8-4.500 15.500 5.500 8 15.500.5 5.500z" fill="#ddd" stroke="#999" strokeWidth="1.300" />
                  <circle cx="8" cy="5.500" r="3.700" fill="#888" />
                  <circle cx="8" cy="5" r="1.400" fill="#eee" />
                </Svg>
              </button>
              <div className="ml-[7px] flex h-[17px] items-center bg-[#969696] pl-[3px] pr-[10px]">
                <Svg box="0 0 16 16" className="h-4 w-4">
                  <path d="M1 4l3-3h11v11l-3 3H1z" fill="#f5f5f7" stroke="#555" strokeWidth="1.200" />
                  <path d="M12 4l3-3v11l-3 3z" fill="#b7bac4" />
                </Svg>
                <span className="ml-[15px] font-['Liberation_Sans',sans-serif] text-[12px] font-bold leading-[17px] text-white">(Unsaved)</span>
              </div>
              <button type="button" aria-label="Activate component" className="ml-1">
                <Svg box="0 0 14 14" className="h-[14px] w-[14px]">
                  <circle cx="7" cy="7" r="6.300" fill="#fff" stroke="#333" strokeWidth="1.200" />
                  <circle cx="7" cy="7" r="2.600" fill="#222" />
                </Svg>
              </button>
            </div>
          </div>
          <div className="mt-auto">
            <PanelBar title="COMMENTS" open={false} />
          </div>
        </aside>
        <ViewBar />
      </main>

      <section aria-label="Timeline" className="flex h-[51px] shrink-0 items-center border-t-2 border-[#cbcbcb] bg-[#f1f1f1] pl-[5px] pr-[13px]">
        <div className="flex">
          {transport.map(([name, d]) => (
            <button key={name} type="button" aria-label={name} className="flex w-[26px] justify-center">
              <Svg box="0 0 16 16" className="h-4 w-4"><path d={d} fill="#484848" /></Svg>
            </button>
          ))}
        </div>
        <div className="ml-[13px] flex">
          <div className="flex flex-col">
            <div className="ml-[2px] mr-[2px] h-[6px] bg-[#e08fe4]" />
            <div className="mt-[2px] flex">
              {features.map(([name, Icon]) => (
                <button key={name} type="button" aria-label={name} className="flex h-[19px] w-[25px] justify-center pr-px">
                  <Icon />
                </button>
              ))}
            </div>
            <div className="mx-3 mt-px flex justify-between border-b-2 border-[#cbcbcb]">
              {features.map(([name]) => (
                <span key={name} className="h-[5px] w-[2px] bg-[#cbcbcb]" />
              ))}
            </div>
          </div>
          <Svg box="0 0 13 34" className="-ml-[7px] mt-[2px] h-[33px] w-[13px]">
            <path d="M0 0h13v4L8 9v25H5V9L0 4z" fill="#606060" />
          </Svg>
        </div>
        <button type="button" aria-label="Timeline settings" className="ml-auto">
          <Svg box="-9 -9 18 18" className="h-[17px] w-[17px]">
            <circle r="4.800" stroke="#999" strokeWidth="3.600" />
            <path d="M0-9v3M0 9V6M-9 0h3M9 0H6M-6.300-6.300l2 2M6.300 6.300l-2-2M-6.300 6.300l2-2M6.300-6.300l-2 2" stroke="#999" strokeWidth="3.600" />
          </Svg>
        </button>
      </section>

      <footer className={"flex h-[42px] shrink-0 items-stretch bg-[#1c1c1c] text-white " + WIN}>
        <button type="button" aria-label="Start" className="flex w-[50px] items-center justify-center">
          <Svg box="48 332 54 54" className="h-[18px] w-[18px]">
            <path d="M48 340l22-4v21H48zM74 335l28-4v26H74zM48 361h22v20l-22-3zM74 361h28v25l-28-4z" fill="#fff" />
          </Svg>
        </button>
        <label className="my-px flex w-[358px] items-center bg-[#f1f1f1] pl-3">
          <Svg box="0 0 18 18" className="h-[18px] w-[18px]">
            <circle cx="11" cy="7" r="6" stroke="#111" strokeWidth="1.400" />
            <path d="M6.500 11.500L1 17" stroke="#111" strokeWidth="1.400" />
          </Svg>
          <input type="text" aria-label="Search" placeholder="Type here to search" className="ml-3 w-full bg-transparent text-[15px] text-[#333] outline-none placeholder:text-[#333] placeholder:opacity-100" />
        </label>
        <button type="button" className="ml-1 flex w-[166px] items-center border-b-[3px] border-[#76b9ed] bg-[#484848] pl-[10px] pt-[2px] text-[12px]">
          <FusionLogo className="h-[25px] w-[25px]" />
          <span className="ml-1 whitespace-nowrap">Autodesk Fusion 36...</span>
        </button>
        <button type="button" className="ml-[5px] flex w-[159px] items-center border-b-[3px] border-[#76b9ed] pl-[7px] pt-[2px] text-[12px]">
          <Svg box="0 0 25 25" className="h-[25px] w-[25px]">
            <path d="M0 0h25v25H0z" fill="#dce9f4" />
            <path d="M4 4h17v14H4z" fill="#b9d3ea" stroke="#7ba3c8" />
            <path d="M8 20h9v2H8z" fill="#4f7dab" />
            <circle cx="17.500" cy="16.500" r="3.800" fill="#ee5555" stroke="#fff" />
          </Svg>
          <span className="ml-1 whitespace-nowrap">Untitled - iSpring Fr...</span>
        </button>
        <div className="ml-auto flex items-center">
          <button type="button" aria-label="Hidden icons">
            <Svg box="0 0 14 8" className="h-2 w-[14px]"><path d="M.5 7.500L7 1l6.500 6.500" stroke="#eee" strokeWidth="1.300" /></Svg>
          </button>
          <button type="button" aria-label="Network" className="ml-3">
            <Svg box="0 0 14 14" className="h-[14px] w-[14px]">
              <path d="M1 13Q1 1 13 1M4 13q0-8.500 9-8.500M7.500 13q0-5 5.500-5" stroke="#bbb" strokeWidth="1.300" />
              <circle cx="12" cy="12" r="1.700" fill="#fff" />
            </Svg>
          </button>
          <button type="button" aria-label="Battery" className="ml-[9px]">
            <Svg box="0 0 18 12" className="h-3 w-[18px]">
              <path d="M5 2.500h10.500v8H3.500V6" stroke="#eee" />
              <path d="M6 4h8.500v5.500H5V7z" fill="#fff" />
              <path d="M16 5h1.500v3H16zM1 1h4v3L3 6 1 4z" fill="#eee" />
            </Svg>
          </button>
          <button type="button" aria-label="Volume" className="ml-[6px]">
            <Svg box="0 0 18 14" className="h-[14px] w-[18px]">
              <path d="M1 5h2.500L7 1.500v11L3.500 9H1z" stroke="#eee" />
              <path d="M9.500 5q1.500 2 0 4M11.500 3q3 4 0 8" stroke="#eee" />
              <path d="M14 1q4.500 6 0 12" stroke="#777" />
            </Svg>
          </button>
          <button type="button" className="ml-[9px] pt-px text-[12px]">ENG</button>
          <button type="button" className="ml-3 flex flex-col items-center text-[12px] leading-[19px]">
            <span>16:03</span>
            <span>09-04-2020</span>
          </button>
          <button type="button" aria-label="Notifications" className="ml-[19px]">
            <Svg box="0 0 18 17" className="h-[17px] w-[18px]">
              <path d="M.7.7h16.600v12H11.500L9 15.500 6.500 12.700H.7z" stroke="#eee" strokeWidth="1.300" />
            </Svg>
          </button>
          <span className="ml-[21px] mr-1 h-[42px] w-px bg-[#666]" />
        </div>
      </footer>
    </div>
  );
}
